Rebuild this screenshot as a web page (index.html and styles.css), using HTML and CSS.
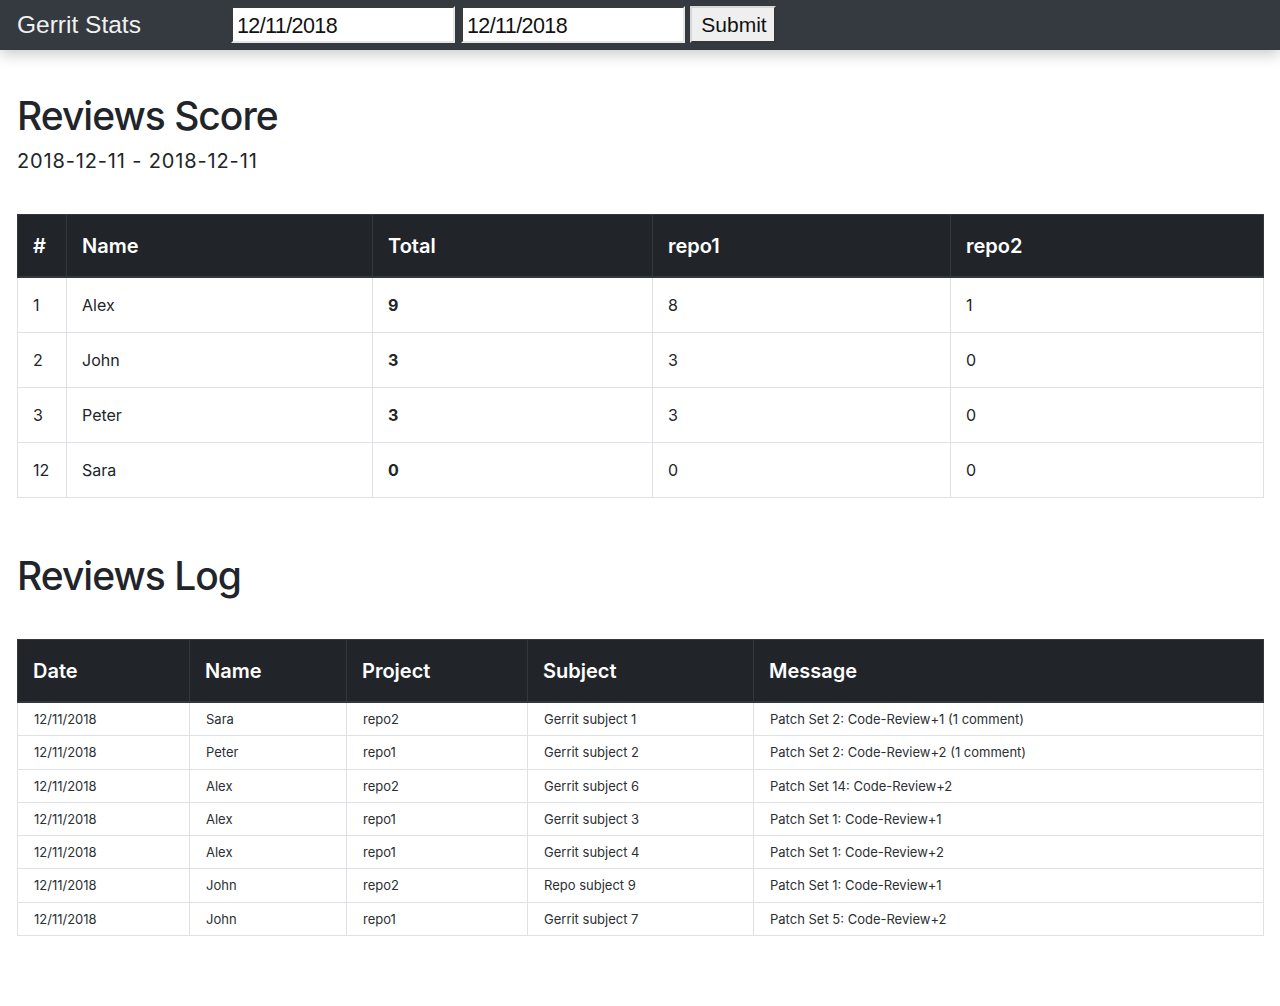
FILE: index.html
```html
<!DOCTYPE html>
<html>
<head>
<meta charset="utf-8">
<link rel="stylesheet" href="styles.css">
</head>
<body>
<nav class="navbar">
  <span class="brand">Gerrit Stats</span>
  <form class="range-form">
    <input class="date-input" type="text" value="12/11/2018">
    <input class="date-input" type="text" value="12/11/2018">
    <button class="submit-btn" type="button">Submit</button>
  </form>
</nav>
<main class="content">
  <h1 class="title title-score">Reviews Score</h1>
  <p class="subtitle">2018-12-11 - 2018-12-11</p>
  <table class="table score-table">
    <colgroup>
      <col class="c-num"><col class="c-name"><col class="c-total"><col class="c-repo1"><col class="c-repo2">
    </colgroup>
    <thead>
      <tr><th>#</th><th>Name</th><th>Total</th><th>repo1</th><th>repo2</th></tr>
    </thead>
    <tbody>
      <tr><td>1</td><td>Alex</td><td class="strong">9</td><td>8</td><td>1</td></tr>
      <tr><td>2</td><td>John</td><td class="strong">3</td><td>3</td><td>0</td></tr>
      <tr><td>3</td><td>Peter</td><td class="strong">3</td><td>3</td><td>0</td></tr>
      <tr><td>12</td><td>Sara</td><td class="strong">0</td><td>0</td><td>0</td></tr>
    </tbody>
  </table>
  <h1 class="title title-log">Reviews Log</h1>
  <table class="table log-table">
    <colgroup>
      <col class="l-date"><col class="l-name"><col class="l-project"><col class="l-subject"><col class="l-message">
    </colgroup>
    <thead>
      <tr><th>Date</th><th>Name</th><th>Project</th><th>Subject</th><th>Message</th></tr>
    </thead>
    <tbody>
      <tr><td>12/11/2018</td><td>Sara</td><td>repo2</td><td>Gerrit subject 1</td><td>Patch Set 2: Code-Review+1 (1 comment)</td></tr>
      <tr><td>12/11/2018</td><td>Peter</td><td>repo1</td><td>Gerrit subject 2</td><td>Patch Set 2: Code-Review+2 (1 comment)</td></tr>
      <tr><td>12/11/2018</td><td>Alex</td><td>repo2</td><td>Gerrit subject 6</td><td>Patch Set 14: Code-Review+2</td></tr>
      <tr><td>12/11/2018</td><td>Alex</td><td>repo1</td><td>Gerrit subject 3</td><td>Patch Set 1: Code-Review+1</td></tr>
      <tr><td>12/11/2018</td><td>Alex</td><td>repo1</td><td>Gerrit subject 4</td><td>Patch Set 1: Code-Review+2</td></tr>
      <tr><td>12/11/2018</td><td>John</td><td>repo2</td><td>Repo subject 9</td><td>Patch Set 1: Code-Review+1</td></tr>
      <tr><td>12/11/2018</td><td>John</td><td>repo1</td><td>Gerrit subject 7</td><td>Patch Set 5: Code-Review+2</td></tr>
    </tbody>
  </table>
</main>
</body>
</html>
```

FILE: styles.css
```css
* { box-sizing: border-box; }
html, body { margin: 0; padding: 0; background: #fff; }
body {
  font-family: Inter, "Noto Sans", sans-serif;
  color: #212529;
}
.navbar {
  height: 50px;
  background: #343a40;
  display: flex;
  align-items: flex-start;
  padding: 6px 0 0 17px;
  box-shadow: 0 4px 14px rgba(0,0,0,0.22);
  position: relative;
  z-index: 1;
}
.brand {
  width: 214px;
  font-family: "Liberation Sans", Arial, sans-serif;
  font-size: 24.5px;
  line-height: 37px;
  color: #f1f1f1;
}
.range-form {
  display: flex;
  align-items: flex-start;
  gap: 6px;
  margin: 0;
}
.date-input {
  width: 224px;
  height: 37px;
  margin: 0;
  padding: 3px 4px 0;
  border: 2px inset #b8b8b8;
  border-top-color: #8e8e8e;
  border-left-color: #8e8e8e;
  border-right-color: #e6e6e6;
  border-bottom-color: #e6e6e6;
  background: #fff;
  font-family: "Liberation Sans", Arial, sans-serif;
  font-size: 21.5px;
  letter-spacing: -0.6px;
  color: #111;
}
.submit-btn {
  margin-left: -1px;
  width: 86px;
  height: 37px;
  background: #efefef;
  border: 2px outset #d8d8d8;
  border-right-color: #8a8a8a;
  border-bottom-color: #8a8a8a;
  font-family: "Liberation Sans", Arial, sans-serif;
  font-size: 21px;
  color: #111;
  padding: 1px 0 0 2px;
}
.content {
  padding: 0 17px;
}
.title {
  font-size: 39px;
  font-weight: 450;
  line-height: 48px;
  margin: 0;
  letter-spacing: -1px;
}
.title-score { margin-top: 42px; margin-bottom: 6px; }
.title-log { margin-top: 54px; margin-bottom: 39px; }
.subtitle {
  font-size: 20px;
  line-height: 30px;
  margin: 0 0 38px;
  letter-spacing: 0.85px;
}
.table {
  width: 1246px;
  border-collapse: collapse;
  table-layout: fixed;
  border: 1px solid #dee2e6;
}
.table th {
  background: #212529;
  color: #fff;
  font-size: 20px;
  font-weight: 600;
  line-height: 30px;
  text-align: left;
  padding: 16px 16px 15px 15px;
  border: 1px solid #32383e;
  border-bottom: 2px solid #32383e;
}
.table td {
  border: 1px solid #dee2e6;
  text-align: left;
  vertical-align: middle;
}
.score-table td {
  font-size: 16px;
  line-height: 24px;
  padding: 15px 16px 15px 15px;
}
.score-table td.strong { font-weight: 700; }
.log-table td {
  font-size: 13px;
  line-height: 20.3px;
  padding: 6px 16px;
  letter-spacing: 0;
  color: #2b2f33;
}
.c-num { width: 49px; }
.c-name { width: 306px; }
.c-total { width: 280px; }
.c-repo1 { width: 298px; }
.c-repo2 { width: 313px; }
.l-date { width: 172px; }
.l-name { width: 157px; }
.l-project { width: 181px; }
.l-subject { width: 226px; }
.l-message { width: 510px; }
```
